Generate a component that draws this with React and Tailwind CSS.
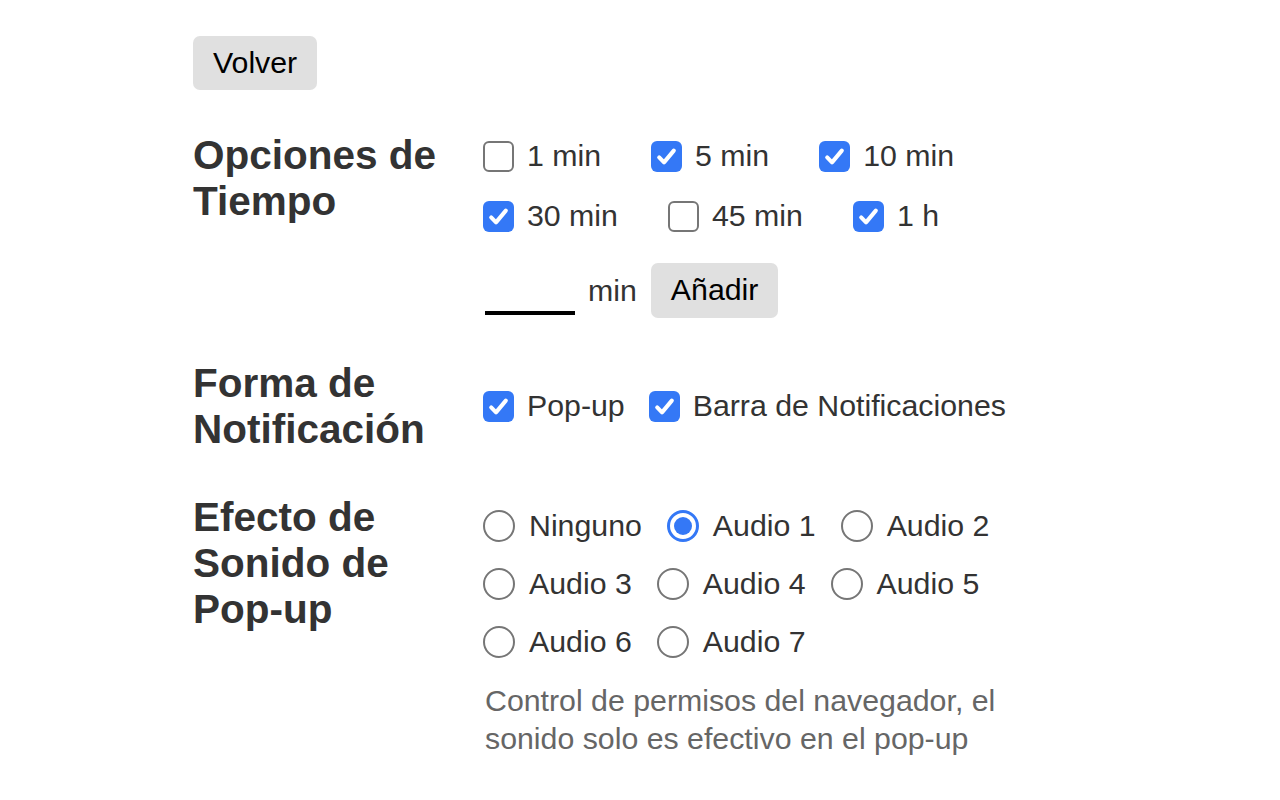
const times = [
  { label: '1 min', on: false },
  { label: '5 min', on: true },
  { label: '10 min', on: true },
  { label: '30 min', on: true },
  { label: '45 min', on: false },
  { label: '1 h', on: true },
]

const sounds = ['Ninguno', 'Audio 1', 'Audio 2', 'Audio 3', 'Audio 4', 'Audio 5', 'Audio 6', 'Audio 7']

function Box({ checked }) {
  if (!checked) {
    return <span className="h-[31px] w-[31px] shrink-0 rounded-[6px] border-2 border-[#767676] bg-white" />
  }
  return (
    <span className="flex h-[31px] w-[31px] shrink-0 items-center justify-center rounded-[6px] bg-[#3478f6]">
      <svg viewBox="0 0 24 24" className="h-[27px] w-[27px]" fill="none" stroke="white" strokeWidth="3.6" strokeLinecap="round" strokeLinejoin="round">
        <path d="M5.5 12.8l4.3 4.4L18.5 6.8" />
      </svg>
    </span>
  )
}

function Radio({ checked }) {
  if (!checked) {
    return <span className="h-[32px] w-[32px] shrink-0 rounded-full border-2 border-[#767676] bg-white" />
  }
  return (
    <span className="flex h-[32px] w-[32px] shrink-0 items-center justify-center rounded-full border-[3px] border-[#3478f6]">
      <span className="h-[18px] w-[18px] rounded-full bg-[#3478f6]" />
    </span>
  )
}

function Heading({ children, className = '' }) {
  return (
    <h2 className={`w-[290px] shrink-0 text-[40.5px] font-bold leading-[46px] text-[#333] ${className}`}>
      {children}
    </h2>
  )
}

export default function App() {
  return (
    <div className="min-h-screen bg-white pl-[193px] pt-[36px] font-['Liberation_Sans',Arial,sans-serif] text-[30.3px] text-[#333]">
      <button className="h-[54px] rounded-[7px] bg-[#e0e0e0] px-[20px] leading-none text-black">
        Volver
      </button>

      {/* Tiempo */}
      <section className="mt-[36px] flex items-start">
        <Heading className="pt-[6px]">Opciones de Tiempo</Heading>
        <div className="w-[530px]">
          <div className="flex flex-wrap gap-x-[50px]">
            {times.map((t) => (
              <label key={t.label} className="flex h-[60px] items-center gap-[13px]">
                <Box checked={t.on} />
                <span>{t.label}</span>
              </label>
            ))}
          </div>
          <div className="mt-[17px] flex h-[55px] items-center">
            <input className="ml-[2px] h-[48px] w-[90px] border-b-4 border-black bg-transparent outline-none" />
            <span className="ml-[13px]">min</span>
            <button className="ml-[14px] h-[55px] rounded-[7px] bg-[#e0e0e0] px-[20px] leading-none text-black">
              Añadir
            </button>
          </div>
        </div>
      </section>

      {/* Notificación */}
      <section className="mt-[42px] flex items-center">
        <Heading>Forma de Notificación</Heading>
        <div className="flex h-[60px] w-[530px] items-center gap-x-[24px]">
          <label className="flex items-center gap-[13px]">
            <Box checked />
            <span>Pop-up</span>
          </label>
          <label className="flex items-center gap-[13px]">
            <Box checked />
            <span>Barra de Notificaciones</span>
          </label>
        </div>
      </section>

      {/* Sonido */}
      <section className="mt-[42px] flex items-start">
        <Heading>Efecto de Sonido de Pop-up</Heading>
        <div className="w-[530px] pt-[3px]">
          <div className="flex flex-wrap gap-x-[25px]">
            {sounds.map((s) => (
              <label key={s} className="flex h-[58px] items-center gap-[14px]">
                <Radio checked={s === 'Audio 1'} />
                <span>{s}</span>
              </label>
            ))}
          </div>
          <p className="ml-[2px] mt-[11px] leading-[38px] text-[#666]">
            Control de permisos del navegador, el sonido solo es efectivo en el pop-up
          </p>
        </div>
      </section>
    </div>
  )
}
